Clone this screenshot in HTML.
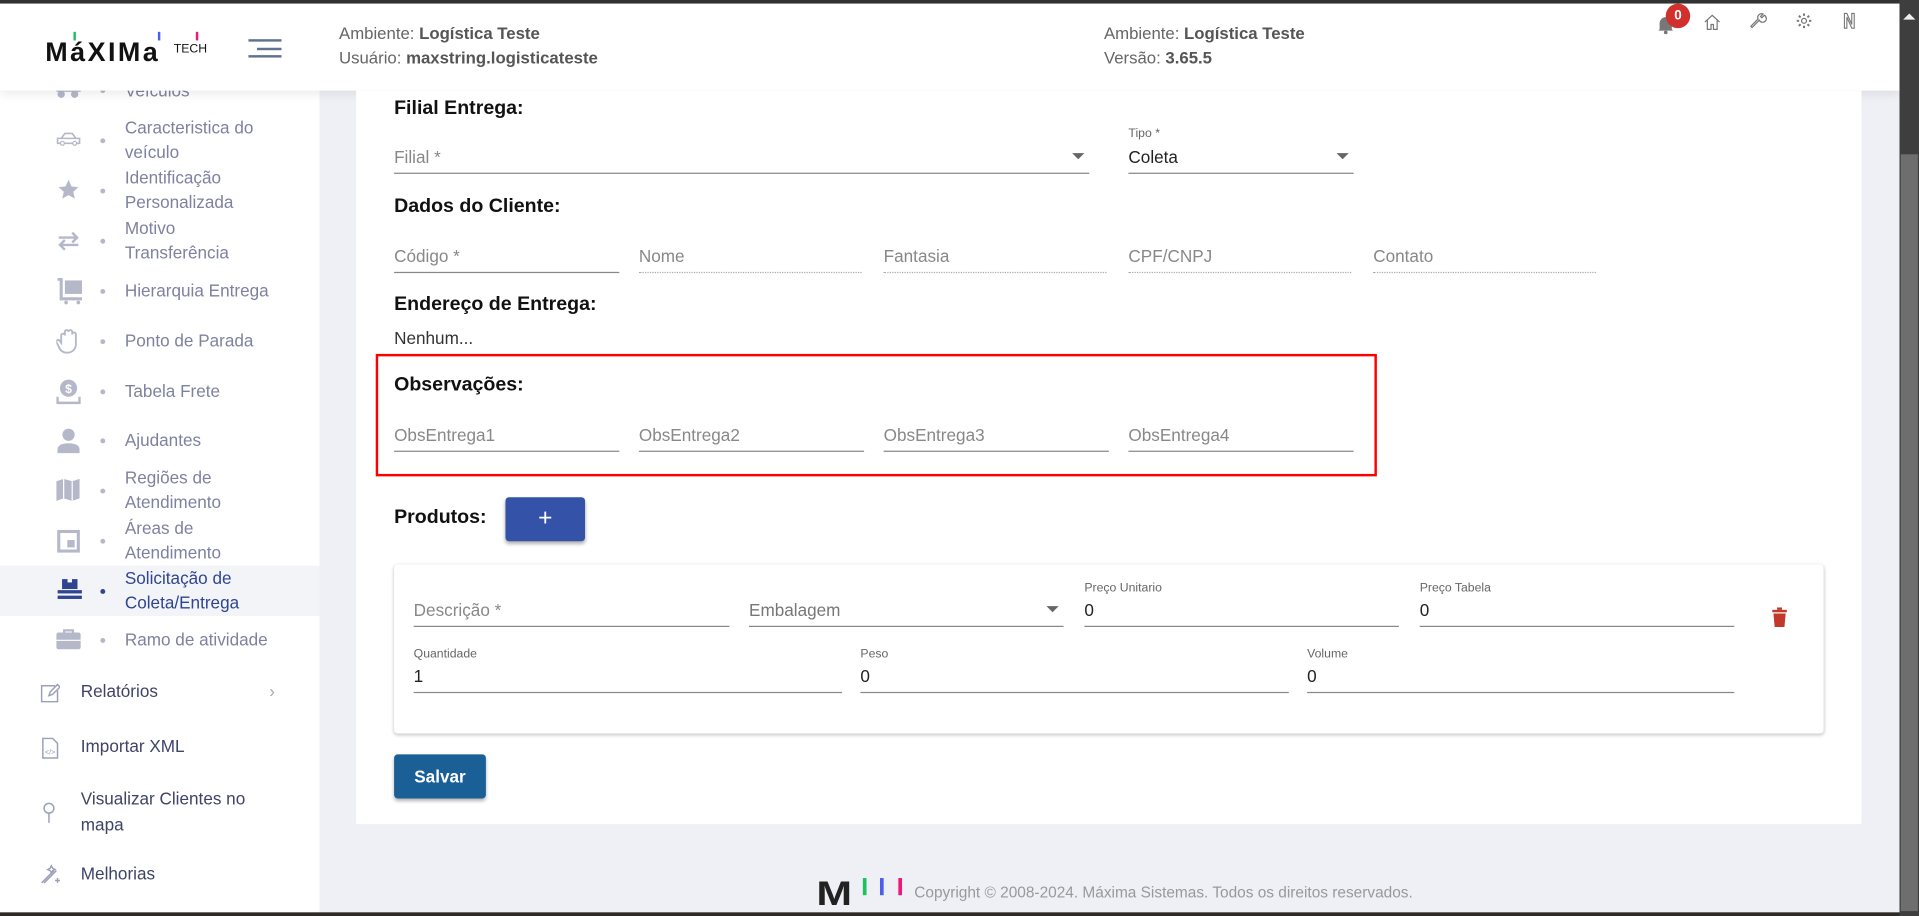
<!DOCTYPE html>
<html><head><meta charset="utf-8">
<style>
html,body{margin:0;padding:0;width:1919px;height:916px;overflow:hidden;background:#eef0f5}
#s{position:absolute;left:0;top:0;width:1568px;height:748px;transform:scale(1.2239,1.2246);transform-origin:0 0;font-family:"Liberation Sans",sans-serif;background:#eef0f5;overflow:hidden}
.a{position:absolute}
.side{left:0;top:74px;width:261px;height:674px;background:#fff}
.it{position:absolute;left:0;width:261px;color:#7d82a0;font-size:14px;line-height:20px}
.it .ic{position:absolute;left:46px;width:20px;height:18px}
.it .dot{position:absolute;left:82px;width:4px;height:4px;border-radius:2px;background:#b5b8c8}
.it .t{position:absolute;left:102px}
.m{position:absolute;left:0;width:261px;color:#3d4466;font-size:14px}
.m .t{position:absolute;left:66px}
h3{position:absolute;margin:0;font-size:16px;font-weight:bold;color:#111;left:322px}
.f{position:absolute;border-bottom:1px solid #888;height:26px;font-size:14px;color:#888;line-height:26px}
.f.d{border-bottom:1px dotted #aaa}
.lab{position:absolute;font-size:10px;color:#666}
.val{color:#222}
.arr{position:absolute;right:4px;top:10px;width:0;height:0;border-left:5px solid transparent;border-right:5px solid transparent;border-top:5px solid #666}
</style></head><body>
<div id="s">
<div class="a" style="left:0;top:0;width:1568px;height:3px;background:#333"></div>
<!-- sidebar -->
<div class="a side"></div>
<div class="a" style="left:0;top:462px;width:261px;height:41px;background:#f3f4f7"></div>
<div class="it" style="top:64px"><svg class="ic" viewBox="0 0 20 18"><rect x="0" y="4" width="20" height="7" fill="#b5b8c8"/><circle cx="4" cy="13" r="3" fill="#b5b8c8"/><circle cx="15" cy="13" r="3" fill="#b5b8c8"/></svg><span class="dot" style="top:8px"></span><span class="t">Veículos</span></div>
<div class="it" style="top:94px"><svg class="ic" style="top:10px" viewBox="0 0 20 12"><path d="M1 6h18v4H1zM4 6l3-4h6l3 4" fill="none" stroke="#b5b8c8" stroke-width="1.3"/><circle cx="5" cy="10" r="1.6" fill="#fff" stroke="#b5b8c8"/><circle cx="15" cy="10" r="1.6" fill="#fff" stroke="#b5b8c8"/></svg><span class="dot" style="top:19px"></span><span class="t">Caracteristica do<br>veículo</span></div>
<div class="it" style="top:135px"><svg class="ic" style="top:11px" viewBox="0 0 20 20"><path d="M10 1l2.8 6 6.2.6-4.7 4.2 1.4 6.2L10 14.8 4.3 18l1.4-6.2L1 7.6 7.2 7z" fill="#b5b8c8"/></svg><span class="dot" style="top:19px"></span><span class="t">Identificação<br>Personalizada</span></div>
<div class="it" style="top:176px"><svg class="ic" style="top:12px" viewBox="0 0 20 16"><path d="M2 5h15M13 1l4 4-4 4M18 11H3M7 7l-4 4 4 4" fill="none" stroke="#b5b8c8" stroke-width="2"/></svg><span class="dot" style="top:19px"></span><span class="t">Motivo<br>Transferência</span></div>
<div class="it" style="top:227px"><svg class="ic" style="top:0px;width:22px;height:22px" viewBox="0 0 22 22"><path d="M1 1h3v16h17" fill="none" stroke="#b5b8c8" stroke-width="2.5"/><rect x="7" y="2" width="14" height="11" fill="#b5b8c8"/><circle cx="8" cy="20" r="1.5" fill="#b5b8c8"/><circle cx="18" cy="20" r="1.5" fill="#b5b8c8"/></svg><span class="dot" style="top:9px"></span><span class="t">Hierarquia Entrega</span></div>
<div class="it" style="top:268px"><svg class="ic" style="top:0;width:20px;height:22px" viewBox="0 0 20 22"><path d="M4 12V6a1.5 1.5 0 013 0V3a1.5 1.5 0 013 0v0a1.5 1.5 0 013 0v2a1.5 1.5 0 013 0v8c0 4-3 7-7 7s-6-2-7-5l-2-4a1.5 1.5 0 012.5-1z" fill="none" stroke="#b5b8c8" stroke-width="1.5"/></svg><span class="dot" style="top:9px"></span><span class="t">Ponto de Parada</span></div>
<div class="it" style="top:309px"><svg class="ic" style="top:0;height:22px" viewBox="0 0 20 22"><circle cx="10" cy="8" r="7" fill="#b5b8c8"/><text x="10" y="12" font-size="10" font-weight="bold" fill="#fff" text-anchor="middle" font-family="Liberation Sans">$</text><path d="M1 15v5h18v-5" fill="none" stroke="#b5b8c8" stroke-width="2"/></svg><span class="dot" style="top:9px"></span><span class="t">Tabela Frete</span></div>
<div class="it" style="top:349px"><svg class="ic" style="top:0;height:22px" viewBox="0 0 20 22"><circle cx="10" cy="6" r="5" fill="#b5b8c8"/><path d="M1 21v-3c0-3 3-5 9-5s9 2 9 5v3z" fill="#b5b8c8"/></svg><span class="dot" style="top:9px"></span><span class="t">Ajudantes</span></div>
<div class="it" style="top:380px"><svg class="ic" style="top:10px;height:20px" viewBox="0 0 20 20"><path d="M0 3l6-2 7 2 6-2v16l-6 2-7-2-6 2z" fill="#b5b8c8"/><path d="M6 1v16M13 3v16" stroke="#fff" stroke-width="1"/></svg><span class="dot" style="top:19px"></span><span class="t">Regiões de<br>Atendimento</span></div>
<div class="it" style="top:421px"><svg class="ic" style="top:11px;height:20px" viewBox="0 0 20 20"><rect x="2" y="2" width="16" height="16" fill="none" stroke="#b5b8c8" stroke-width="2.5"/><rect x="9" y="9" width="6" height="6" fill="#b5b8c8"/></svg><span class="dot" style="top:19px"></span><span class="t">Áreas de<br>Atendimento</span></div>
<div class="it" style="top:462px;color:#2f4590"><svg class="ic" style="top:10px;width:22px" viewBox="0 0 22 20"><rect x="4" y="1" width="14" height="9" fill="#2f4590"/><rect x="9" y="1" width="4" height="3" fill="#fff"/><rect x="0" y="11" width="22" height="3" fill="#2f4590"/><rect x="0" y="16" width="22" height="3" fill="#2f4590"/></svg><span class="dot" style="top:19px;background:#2f4590"></span><span class="t">Solicitação de<br>Coleta/Entrega</span></div>
<div class="it" style="top:512px"><svg class="ic" style="top:0;height:20px" viewBox="0 0 22 20"><path d="M7 4V2h8v2" fill="none" stroke="#b5b8c8" stroke-width="2"/><rect x="0" y="4" width="22" height="15" rx="2" fill="#b5b8c8"/><path d="M0 11h22" stroke="#fff"/></svg><span class="dot" style="top:9px"></span><span class="t">Ramo de atividade</span></div>
<div class="m" style="top:556px"><svg class="a" style="left:33px;top:2px" width="16" height="16" viewBox="0 0 16 16"><path d="M12 2H1v13h13V6M7 10l1-3 6-6 2 2-6 6z" fill="none" stroke="#9aa0b8" stroke-width="1.2"/></svg><span class="t">Relatórios</span><span class="a" style="left:220px;color:#aaa">›</span></div>
<div class="m" style="top:601px"><svg class="a" style="left:34px;top:1px" width="14" height="18" viewBox="0 0 14 18"><path d="M1 1h8l4 4v12H1z" fill="none" stroke="#9aa0b8" stroke-width="1.2"/><text x="7" y="14" font-size="6" fill="#9aa0b8" text-anchor="middle" font-family="Liberation Sans">&lt;/&gt;</text></svg><span class="t">Importar XML</span></div>
<div class="m" style="top:642px;line-height:21px"><svg class="a" style="left:34px;top:13px" width="12" height="18" viewBox="0 0 12 18"><circle cx="6" cy="5" r="4" fill="none" stroke="#9aa0b8" stroke-width="1.2"/><path d="M6 9v8" stroke="#9aa0b8" stroke-width="1.2"/></svg><span class="t">Visualizar Clientes no<br>mapa</span></div>
<div class="m" style="top:705px"><svg class="a" style="left:32px;top:0" width="18" height="18" viewBox="0 0 18 18"><path d="M2 16L12 6M4 16l10-10M10 2l1 2 2 1-2 1-1 2-1-2-2-1 2-1zM15 12v4M13 14h4" fill="none" stroke="#9aa0b8" stroke-width="1.2"/></svg><span class="t">Melhorias</span></div>

<!-- header -->
<div class="a" style="left:0;top:3px;width:1552px;height:71px;background:#fff;box-shadow:0 3px 8px rgba(0,0,0,.08)"></div>
<div class="a" style="left:37px;top:31px;font-size:22px;font-weight:bold;color:#111;letter-spacing:2px;line-height:24px">MáXIMa</div>
<div class="a" style="left:60px;top:26px;width:2px;height:7px;background:#1ec25a"></div>
<div class="a" style="left:129px;top:26px;width:2px;height:7px;background:#4a5ef0"></div>
<div class="a" style="left:160px;top:26px;width:2px;height:7px;background:#ef1879"></div>
<div class="a" style="left:142px;top:35px;font-size:10px;color:#111">TECH</div>
<div class="a" style="left:203px;top:32px;width:27px;height:1.5px;background:#5f7390"></div>
<div class="a" style="left:210px;top:39px;width:20px;height:1.5px;background:#5f7390"></div>
<div class="a" style="left:203px;top:45px;width:27px;height:1.5px;background:#5f7390"></div>
<div class="a" style="left:277px;top:18px;font-size:13.7px;color:#666;line-height:20px">Ambiente: <b style="color:#555">Logística Teste</b><br>Usuário: <b style="color:#555">maxstring.logisticateste</b></div>
<div class="a" style="left:902px;top:18px;font-size:13.7px;color:#666;line-height:20px">Ambiente: <b style="color:#555">Logística Teste</b><br>Versão: <b style="color:#555">3.65.5</b></div>
<svg class="a" style="left:1354px;top:12px" width="14" height="16" viewBox="0 0 14 16"><path d="M2 12V7a5 5 0 0110 0v5l1 1H1z" fill="#777"/><circle cx="7" cy="14.5" r="1.5" fill="#777"/></svg>
<div class="a" style="left:1361px;top:3px;width:20px;height:20px;border-radius:10px;background:#d0312d;color:#fff;font-size:11px;font-weight:bold;text-align:center;line-height:20px">0</div>
<svg class="a" style="left:1392px;top:11px" width="14" height="14" viewBox="0 0 14 14"><path d="M1 7l6-5.5L13 7M3 5.5V13h3V9h2v4h3V5.5" fill="none" stroke="#777" stroke-width="1"/></svg>
<svg class="a" style="left:1430px;top:10px" width="14" height="14" viewBox="0 0 14 14"><path d="M1.5 12.5l6-6a3 3 0 104-4l-2 2-1-1 2-2a3 3 0 00-4 4l-6 6z" fill="none" stroke="#777" stroke-width="1"/></svg>
<svg class="a" style="left:1467px;top:10px" width="14" height="14" viewBox="0 0 14 14"><circle cx="7" cy="7" r="2" fill="none" stroke="#777"/><path d="M7 1v2M7 11v2M1 7h2M11 7h2M2.8 2.8l1.4 1.4M9.8 9.8l1.4 1.4M2.8 11.2l1.4-1.4M9.8 4.2l1.4-1.4" stroke="#777" stroke-width="1.6"/></svg>
<svg class="a" style="left:1506px;top:10px" width="10" height="14" viewBox="0 0 10 14"><path d="M1 1v12h2V4l4 9h2V1H7v9L3 1z" fill="none" stroke="#777" stroke-width="0.9"/></svg>
<!-- scrollbar -->
<div class="a" style="left:1552px;top:0;width:16px;height:748px;background:#3e3e3e"></div>
<div class="a" style="left:1553px;top:126px;width:14px;height:618px;background:#6e6e6e"></div>
<div class="a" style="left:1555px;top:11px;width:0;height:0;border-left:5px solid transparent;border-right:5px solid transparent;border-bottom:5px solid #eee"></div>
<div class="a" style="left:0;top:745px;width:1552px;height:3px;background:#2e2a28"></div>

<!-- card -->
<div class="a" style="left:291px;top:74px;width:1230px;height:599px;background:#fff"></div>
<h3 style="top:80px">Filial Entrega:</h3>
<div class="f" style="left:322px;top:115px;width:568px">Filial *<span class="arr"></span></div>
<div class="lab" style="left:922px;top:104px">Tipo *</div>
<div class="f" style="left:922px;top:115px;width:184px"><span class="val">Coleta</span><span class="arr"></span></div>
<h3 style="top:160px">Dados do Cliente:</h3>
<div class="f" style="left:322px;top:196px;width:184px">Código *</div>
<div class="f d" style="left:522px;top:196px;width:182px">Nome</div>
<div class="f d" style="left:722px;top:196px;width:182px">Fantasia</div>
<div class="f d" style="left:922px;top:196px;width:182px">CPF/CNPJ</div>
<div class="f d" style="left:1122px;top:196px;width:182px">Contato</div>
<h3 style="top:240px">Endereço de Entrega:</h3>
<div class="a" style="left:322px;top:268px;font-size:14px;color:#333">Nenhum...</div>
<div class="a" style="left:307px;top:289px;width:814px;height:96px;border:2px solid #f00"></div>
<h3 style="top:306px">Observações:</h3>
<div class="f" style="left:322px;top:342px;width:184px">ObsEntrega1</div>
<div class="f" style="left:522px;top:342px;width:184px">ObsEntrega2</div>
<div class="f" style="left:722px;top:342px;width:184px">ObsEntrega3</div>
<div class="f" style="left:922px;top:342px;width:184px">ObsEntrega4</div>
<h3 style="top:414px">Produtos:</h3>
<div class="a" style="left:413px;top:406px;width:65px;height:36px;background:#3452a8;border-radius:3px;box-shadow:0 2px 3px rgba(0,0,0,.3);color:#fff;font-size:20px;text-align:center;line-height:34px">+</div>
<div class="a" style="left:322px;top:461px;width:1168px;height:138px;background:#fff;box-shadow:0 1px 3px rgba(0,0,0,.25);border-radius:3px"></div>
<div class="f" style="left:338px;top:485px;width:258px">Descrição *</div>
<div class="f" style="left:612px;top:485px;width:257px;color:#777">Embalagem<span class="arr"></span></div>
<div class="lab" style="left:886px;top:475px">Preço Unitario</div>
<div class="f" style="left:886px;top:485px;width:257px"><span class="val">0</span></div>
<div class="lab" style="left:1160px;top:475px">Preço Tabela</div>
<div class="f" style="left:1160px;top:485px;width:257px"><span class="val">0</span></div>
<svg class="a" style="left:1448px;top:496px" width="12" height="16" viewBox="0 0 12 16"><rect x="4" y="0" width="4" height="2" fill="#c0392b"/><rect x="0" y="2" width="12" height="2" fill="#c0392b"/><path d="M1 5h10l-1 11H2z" fill="#c0392b"/></svg>
<div class="lab" style="left:338px;top:529px">Quantidade</div>
<div class="f" style="left:338px;top:539px;width:350px"><span class="val">1</span></div>
<div class="lab" style="left:703px;top:529px">Peso</div>
<div class="f" style="left:703px;top:539px;width:350px"><span class="val">0</span></div>
<div class="lab" style="left:1068px;top:529px">Volume</div>
<div class="f" style="left:1068px;top:539px;width:349px"><span class="val">0</span></div>
<div class="a" style="left:322px;top:616px;width:75px;height:36px;background:#1a5f96;border-radius:3px;box-shadow:0 2px 3px rgba(0,0,0,.3);color:#fff;font-size:14px;font-weight:bold;text-align:center;line-height:36px">Salvar</div>

<!-- footer -->
<div class="a" style="left:667px;top:717px;font-size:28px;font-weight:bold;color:#222;line-height:26px;transform:scaleX(1.25);transform-origin:0 0">M</div>
<div class="a" style="left:705px;top:717px;width:3px;height:14px;background:#1ec25a"></div>
<div class="a" style="left:719px;top:717px;width:3px;height:14px;background:#4a5ef0"></div>
<div class="a" style="left:734px;top:717px;width:3px;height:14px;background:#ef1879"></div>
<div class="a" style="left:747px;top:722px;font-size:12.6px;color:#999">Copyright © 2008-2024. Máxima Sistemas. Todos os direitos reservados.</div>
</div>
</body></html>
